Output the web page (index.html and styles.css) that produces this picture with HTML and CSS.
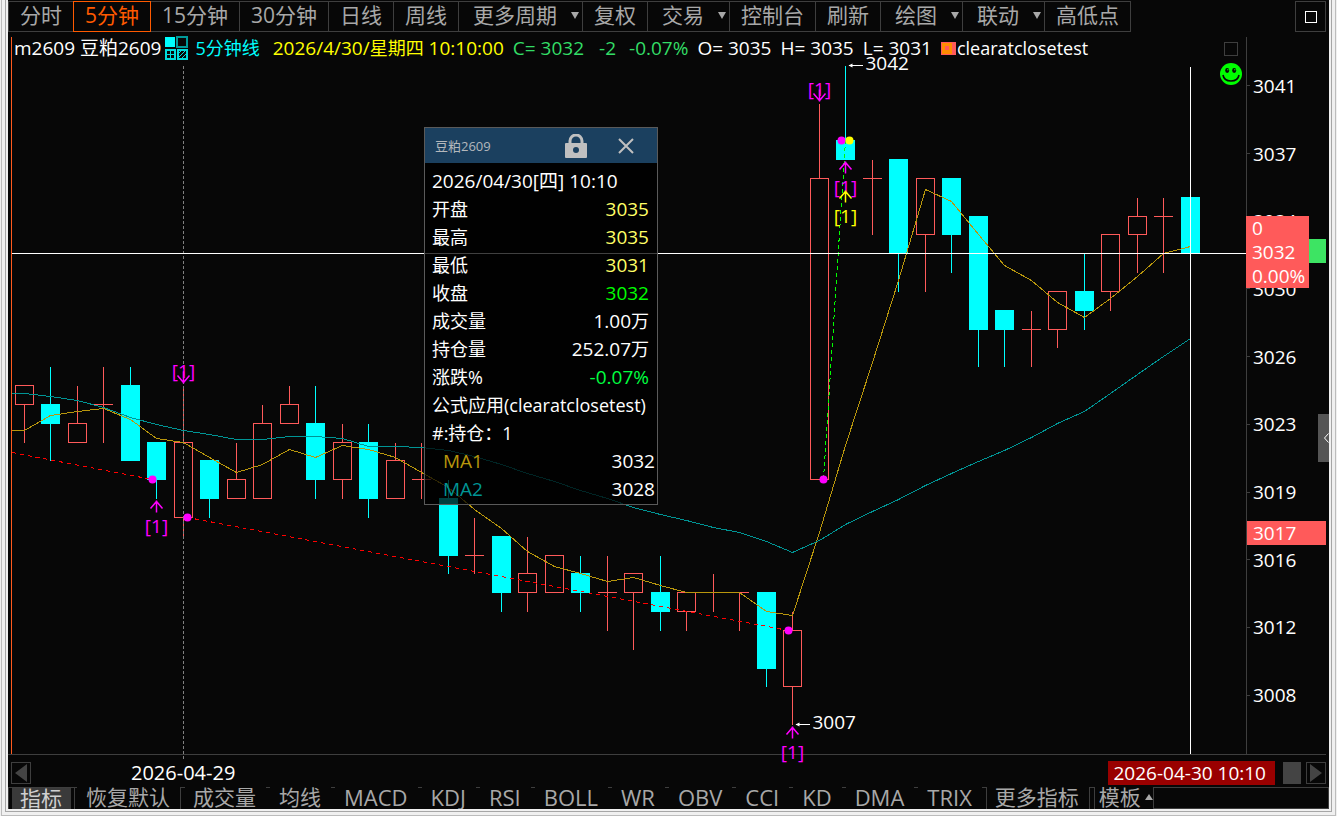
FILE: index.html
```html
<!DOCTYPE html>
<html lang="zh-CN">
<head>
    <meta charset="UTF-8">
    <meta name="viewport" content="width=device-width, initial-scale=1.0">
    <title>豆粕2609 5分钟线</title>
    <link rel="stylesheet" href="styles.css">
</head>
<body>
<div class="frame">
<div class="window">

    <!-- 周期工具栏 -->
    <header class="toolbar">
        <nav class="periods">
            <button type="button">分时</button>
            <button type="button" class="active">5分钟</button>
            <button type="button">15分钟</button>
            <button type="button">30分钟</button>
            <button type="button">日线</button>
            <button type="button">周线</button>
            <button type="button" class="menu">更多周期</button>
            <button type="button">复权</button>
            <button type="button" class="menu">交易</button>
            <button type="button">控制台</button>
            <button type="button">刷新</button>
            <button type="button" class="menu">绘图</button>
            <button type="button" class="menu">联动</button>
            <button type="button">高低点</button>
        </nav>
        <button type="button" class="maximize" aria-label="最大化"></button>
    </header>

    <main class="chart">
        <div class="plot">
            <svg id="kline" class="kline"></svg>

            <div class="quote">
                <span class="name">m2609 豆粕2609</span>
                <svg class="grid-icon" width="24" height="24" viewBox="0 0 24 24" shape-rendering="crispEdges">
                    <rect x="1" y="1" width="10" height="10" fill="#00ffff"/>
                    <rect x="13.5" y="1.5" width="9" height="9" fill="none" stroke="#009a9a"/>
                    <rect x="12.5" y="0.5" width="11" height="11" fill="none" stroke="#009a9a"/>
                    <rect x="1.5" y="13.5" width="9" height="9" fill="none" stroke="#00dddd" stroke-width="2"/>
                    <path d="M6 13v10M1 18h10" stroke="#00dddd"/>
                    <rect x="13.5" y="13.5" width="9" height="9" fill="none" stroke="#00dddd" stroke-width="2"/>
                    <path d="M14 18l4-4M14 22l8-8M18 22l4-4" stroke="#00dddd"/>
                </svg>
                <span class="period">5分钟线</span>
                <span class="date">2026/4/30/<small>星期四</small> 10:10:00</span>
                <span class="fall close">C= 3032</span>
                <span class="fall diff">-2</span>
                <span class="fall pct">-0.07%</span>
                <span>O= 3035</span>
                <span>H= 3035</span>
                <span>L= 3031</span>
                <span class="strategy"><i></i>clearatclosetest</span>
            </div>

            <input type="checkbox" class="pin" aria-label="锁定">
            <svg class="smile" width="22" height="22" viewBox="0 0 22 22">
                <circle cx="11" cy="11" r="11" fill="#00ff00"/>
                <ellipse cx="7.2" cy="7.5" rx="2" ry="2.4" fill="#070707"/>
                <ellipse cx="14.2" cy="7.5" rx="2" ry="2.4" fill="#070707"/>
                <circle cx="7.8" cy="6.8" r="0.7" fill="#00ff00"/>
                <circle cx="14.8" cy="6.8" r="0.7" fill="#00ff00"/>
                <path d="M3 12q1 6 8 6t8-6" fill="none" stroke="#070707" stroke-width="1.6"/>
            </svg>

            <!-- 数据浮窗 -->
            <section class="popup">
                <div class="popup-head">
                    <h2>豆粕2609</h2>
                    <button type="button" aria-label="锁定浮窗">
                        <svg width="24" height="24" viewBox="0 0 24 24">
                            <path d="M6 11V7a6 6 0 0 1 12 0v4" fill="none" stroke="#c0c0c0" stroke-width="3"/>
                            <rect x="1" y="9" width="22" height="15" rx="1" fill="#c0c0c0"/>
                            <circle cx="12" cy="16" r="3" fill="#1b405f"/>
                        </svg>
                    </button>
                    <button type="button" aria-label="关闭">
                        <svg width="16" height="16" viewBox="0 0 16 16">
                            <path d="M1 1l14 14M15 1L1 15" stroke="#c0c0c0" stroke-width="2"/>
                        </svg>
                    </button>
                </div>
                <dl>
                    <div><dt class="num">2026/04/30[四] 10:10</dt></div>
                    <div><dt>开盘</dt><dd class="rise">3035</dd></div>
                    <div><dt>最高</dt><dd class="rise">3035</dd></div>
                    <div><dt>最低</dt><dd class="rise">3031</dd></div>
                    <div><dt>收盘</dt><dd class="last">3032</dd></div>
                    <div><dt>成交量</dt><dd>1.00<small>万</small></dd></div>
                    <div><dt>持仓量</dt><dd>252.07<small>万</small></dd></div>
                    <div><dt>涨跌%</dt><dd class="chg">-0.07%</dd></div>
                    <div><dt>公式应用(clearatclosetest)</dt></div>
                    <div><dt>#:持仓：1</dt></div>
                    <div class="ma ma1"><dt>MA1</dt><dd>3032</dd></div>
                    <div class="ma ma2"><dt>MA2</dt><dd>3028</dd></div>
                </dl>
            </section>
        </div>

        <!-- 价格轴 -->
        <aside class="price-axis">
            <ol>
                <li>3041</li>
                <li>3037</li>
                <li>3034</li>
                <li>3030</li>
                <li>3026</li>
                <li>3023</li>
                <li>3019</li>
                <li>3016</li>
                <li>3012</li>
                <li>3008</li>
            </ol>
            <div class="last-mark"></div>
            <div class="cursor-price">
                <span>0</span>
                <span>3032</span>
                <span>0.00%</span>
            </div>
            <div class="base-price">3017</div>
            <button type="button" class="collapse" aria-label="收起侧栏">
                <svg width="5" height="10" viewBox="0 0 5 10"><path d="M4.5 0.5L0.5 5l4 4.5" fill="none" stroke="#ffffff"/></svg>
            </button>
        </aside>
    </main>

    <!-- 时间轴 -->
    <div class="time-axis">
        <button type="button" class="scroll-btn" aria-label="向左">
            <svg width="12" height="18" viewBox="0 0 12 18"><path d="M12 0v18L0 9z" fill="#444"/></svg>
        </button>
        <time class="day">2026-04-29</time>
        <time class="cursor-time">2026-04-30 10:10</time>
        <div class="thumb"></div>
        <button type="button" class="scroll-btn" aria-label="向右">
            <svg width="12" height="18" viewBox="0 0 12 18"><path d="M0 0v18l12-9z" fill="#444"/></svg>
        </button>
    </div>

    <!-- 指标栏 -->
    <footer class="indicators">
        <button type="button" class="cn active">指标</button>
        <button type="button" class="cn">恢复默认</button>
        <button type="button" class="cn first">成交量</button>
        <button type="button" class="cn">均线</button>
        <button type="button">MACD</button>
        <button type="button">KDJ</button>
        <button type="button">RSI</button>
        <button type="button">BOLL</button>
        <button type="button">WR</button>
        <button type="button">OBV</button>
        <button type="button">CCI</button>
        <button type="button">KD</button>
        <button type="button">DMA</button>
        <button type="button">TRIX</button>
        <button type="button" class="cn more">更多指标</button>
        <button type="button" class="cn template">模板</button>
        <div class="rest"></div>
    </footer>

</div>
</div>
<script src="chart.js"></script>
</body>
</html>
```

FILE: styles.css
```css
* {
    box-sizing: border-box;
}

body {
    margin: 0;
    height: 100vh;
    overflow: hidden;
    background-color: #f0f0f0;
    color: #fff;
    font-family: "Open Sans", "Noto Sans CJK SC", sans-serif;
    font-size: 19px;
    line-height: 24px;
}

button {
    margin: 0;
    padding: 0;
    border: none;
    background: none;
    color: inherit;
    font: inherit;
    cursor: pointer;
}

svg {
    display: block;
}

small {
    font-size: 18px;
}

/* window frame */
.frame {
    height: 100%;
    margin: 0 1px;
    padding: 0 3px 3px;
    border: 1px solid #bcbcbc;
    border-top: none;
}

.window {
    display: flex;
    flex-direction: column;
    height: 100%;
    border: 1px solid #a6a6a6;
    border-top: none;
    padding: 0 2px 2px;
    background: #070707 content-box;
}

/* toolbar */
.toolbar {
    display: flex;
    justify-content: space-between;
    height: 32px;
    padding: 1px 3px 0 0;
    font-size: 21px;
    color: #a8a8a8;
}

.periods {
    display: flex;
    border: 1px solid #3e3e3e;
}

.periods button {
    padding: 0 11px 3px;
    border-right: 1px solid #3e3e3e;
    white-space: nowrap;
}

.periods button:last-child {
    border-right: none;
}

.periods .active {
    margin: -1px 0 -1px -1px;
    border: 1px solid #ff5a00;
    color: #ff5a00;
}

.periods .menu {
    display: flex;
    align-items: center;
    gap: 14px;
    padding: 0 3px 3px 14px;
}

.menu::after {
    content: "";
    border: 4px solid transparent;
    border-top: 7px solid #a8a8a8;
    border-bottom: none;
}

.maximize {
    display: flex;
    align-items: center;
    justify-content: center;
    width: 31px;
    border: 1px solid #3e3e3e;
}

.maximize::after {
    content: "";
    width: 10px;
    height: 10px;
    border: 1px solid #fff;
}

/* chart */
.chart {
    display: flex;
    flex: 1;
    min-height: 0;
    margin-right: 3px;
    border-bottom: 1px solid #3e3e3e;
}

.plot {
    position: relative;
    flex: 1;
    min-width: 0;
}

.kline {
    position: absolute;
    top: 0;
    left: 0;
    width: 100%;
    height: 100%;
    overflow: visible;
}

.kline text {
    font-size: 19px;
}

.quote {
    position: relative;
    display: flex;
    align-items: center;
    gap: 9px;
    padding: 4px 0 0 6px;
    white-space: nowrap;
}

.quote .name {
    margin-right: -6px;
}

.quote .period {
    margin-left: -2px;
    color: #00ffff;
    font-size: 18px;
}

.quote .date {
    margin-left: 4px;
    color: #ffff00;
}

.quote .fall {
    color: #33dd66;
}

.quote .diff {
    margin: 0 4px 0 6px;
}

.strategy {
    display: flex;
    align-items: center;
    font-size: 18px;
}

.strategy i {
    width: 15px;
    height: 13px;
    margin-right: 1px;
    border: 1px solid #ff5a5a;
    border-right-width: 4px;
    background: linear-gradient(#ff5a5a, #ff5a5a) center / 4px 4px no-repeat #ff8c00;
}

.pin {
    position: absolute;
    top: 10px;
    right: 8px;
    width: 14px;
    height: 14px;
    margin: 0;
    appearance: none;
    border: 1px solid #3e3e3e;
}

.smile {
    position: absolute;
    top: 31px;
    right: 4px;
}

/* popup */
.popup {
    position: absolute;
    top: 95px;
    left: 416px;
    width: 234px;
    border: 1px solid #5a5a5a;
    background-color: rgba(0, 0, 0, 0.75);
}

.popup-head {
    display: flex;
    align-items: center;
    height: 35px;
    padding: 0 23px 0 10px;
    background-color: #1b405f;
}

.popup h2 {
    flex: 1;
    margin: 0;
    color: #b4b8bc;
    font-size: 13px;
    font-weight: normal;
}

.popup-head button + button {
    margin-left: 30px;
}

.popup dl {
    margin: 0;
    padding: 4px 8px 1px 7px;
}

.popup dl div {
    display: flex;
    justify-content: space-between;
    line-height: 28px;
    white-space: nowrap;
}

.popup dt {
    font-size: 18px;
}

.popup dt.num {
    font-size: 19px;
}

.popup dd {
    margin: 0;
}

.popup .rise {
    color: #ffff66;
}

.popup .last {
    color: #00ff00;
}

.popup .chg {
    color: #00ff40;
}

.popup .ma {
    margin: 0 -6px 0 11px;
}

.popup .ma dt {
    font-size: 19px;
}

.ma1 dt {
    color: #b8960c;
}

.ma2 dt {
    color: #009494;
}

/* price axis */
.price-axis {
    position: relative;
    width: 80px;
}

.price-axis ol {
    display: flex;
    flex-direction: column;
    height: 100%;
    margin: 0;
    padding: 20px 0 25px;
    list-style: none;
    background: linear-gradient(#3e3e3e, #3e3e3e) 0 5px / 1px 100% no-repeat;
}

.price-axis li {
    display: flex;
    flex: 1;
    align-items: center;
    gap: 3px;
}

.price-axis li::before {
    content: "";
    width: 4px;
    height: 1px;
    background-color: #3e3e3e;
}

.cursor-price,
.base-price,
.last-mark,
.collapse {
    position: absolute;
}

.cursor-price {
    top: 184px;
    left: 0;
    width: 63px;
    padding-left: 6px;
    background-color: #ff5a5a;
}

.cursor-price span {
    display: block;
}

.last-mark {
    top: 207px;
    right: 0;
    width: 17px;
    height: 24px;
    background-color: #3de463;
}

.base-price {
    top: 489px;
    left: 1px;
    right: 0;
    padding-left: 6px;
    background-color: #ff5a5a;
}

.collapse {
    top: 382px;
    right: -3px;
    width: 11px;
    height: 48px;
    padding-left: 6px;
    background-color: #555;
}

/* time axis */
.time-axis {
    display: flex;
    align-items: center;
    height: 32px;
    padding: 3px 3px 0;
}

.scroll-btn {
    display: flex;
    align-items: center;
    justify-content: center;
    width: 20px;
    height: 22px;
    border: 1px solid #3e3e3e;
}

.day {
    flex: 1;
    margin-left: 100px;
    font-size: 20px;
}

.cursor-time {
    padding: 0 9px 0 5px;
    background-color: #990000;
}

.thumb {
    width: 18px;
    height: 22px;
    margin: 0 5px 0 8px;
    background-color: #444;
}

/* indicators */
.indicators {
    display: flex;
    height: 22px;
    overflow: hidden;
    color: #a8a8a8;
    font-size: 22px;
    line-height: 20px;
}

.indicators button {
    position: relative;
    padding: 0 12px 2px 11px;
    white-space: nowrap;
}

.indicators button + button::before {
    content: "";
    position: absolute;
    top: 0;
    left: -2px;
    width: 4px;
    height: 22px;
    border: 1px solid #3e3e3e;
    border-left: none;
    border-right: none;
}

.indicators .cn {
    font-size: 21px;
}

.indicators .active {
    border: 1px solid #3e3e3e;
    border-bottom: none;
    background: linear-gradient(#3a3a3a, #3a3a3a) center / calc(100% - 6px) 100% no-repeat;
    color: #d0d0d0;
}

.indicators .first::before {
    border-left: 1px solid #3e3e3e;
}

.indicators .more::before {
    border-right: 1px solid #3e3e3e;
}

.indicators .template {
    display: flex;
    align-items: center;
    gap: 4px;
    padding: 0 0 2px 8px;
}

.indicators button.template::before {
    border: 1px solid #3e3e3e;
}

.indicators .template::after {
    content: "";
    border: 4px solid transparent;
    border-bottom: 6px solid #a8a8a8;
    border-top: none;
}

.indicators .rest {
    flex: 1;
    border: 1px solid #3e3e3e;
}
```

FILE: chart.js
```js
// [开, 高, 低, 收]
const bars = [
    [3024, 3025, 3022, 3025], [3024, 3026, 3021, 3023], [3022, 3025, 3022, 3023],
    [3024, 3026, 3022, 3024], [3025, 3026, 3021, 3021], [3022, 3022, 3019, 3020],
    [3018, 3025, 3017, 3022], [3021, 3021, 3018, 3019], [3019, 3022, 3019, 3020],
    [3019, 3024, 3019, 3023], [3023, 3025, 3023, 3024], [3023, 3025, 3019, 3020],
    [3020, 3023, 3019, 3022], [3022, 3023, 3018, 3019], [3019, 3022, 3019, 3021],
    [3020, 3022, 3019, 3020], [3019, 3020, 3015, 3016], [3016, 3018, 3015, 3016],
    [3017, 3017, 3013, 3014], [3014, 3017, 3013, 3015], [3014, 3016, 3014, 3016],
    [3015, 3016, 3013, 3014], [3014, 3016, 3012, 3014], [3014, 3015, 3011, 3015],
    [3014, 3016, 3012, 3013], [3013, 3014, 3012, 3014], [3014, 3015, 3013, 3014],
    [3014, 3014, 3012, 3014], [3014, 3014, 3009, 3010], [3009, 3013, 3007, 3012],
    [3020, 3040, 3020, 3036], [3038, 3042, 3037, 3037], [3036, 3037, 3033, 3036],
    [3037, 3037, 3030, 3032], [3033, 3036, 3030, 3036], [3036, 3036, 3031, 3033],
    [3034, 3034, 3026, 3028], [3029, 3029, 3026, 3028], [3028, 3029, 3026, 3028],
    [3028, 3030, 3027, 3030], [3030, 3032, 3028, 3029], [3030, 3033, 3029, 3033],
    [3033, 3035, 3031, 3034], [3034, 3035, 3031, 3034], [3035, 3035, 3031, 3032]
];

// 窗口左侧之前的均线值
const ma5Head = [3022.6, 3023.4, 3023.6, 3023.8];
const ma20Head = [3024.6, 3024.4, 3024.2, 3023.85, 3023.3, 3022.95, 3022.6, 3022.4, 3022.15, 3022.15,
    3022.3, 3022.3, 3022.2, 3021.75, 3021.75, 3021.7, 3021.55, 3021.25, 3020.8];

const HIGH = 3042;
const LOW = 3007;
const svg = document.getElementById('kline');

function average(n, head) {
    return bars.map((bar, i) => {
        if (i < head.length) return head[i];
        return bars.slice(i - n + 1, i + 1).reduce((sum, b) => sum + b[3], 0) / n;
    });
}

function draw() {
    const w = svg.clientWidth;
    const h = svg.clientHeight;
    const step = (w - 72) / (bars.length - 1);
    const x = i => Math.floor(16 + i * step) + 0.5;
    const y = p => Math.round(33 + (HIGH - p) * (h - 63) / (HIGH - LOW)) + 0.5;
    const out = [];

    const line = (x1, y1, x2, y2, color, dash) => {
        out.push(`<line x1="${x1}" y1="${y1}" x2="${x2}" y2="${y2}" stroke="${color}" stroke-dasharray="${dash || 'none'}" shape-rendering="crispEdges"/>`);
    };
    const text = (tx, ty, color, str, anchor) => {
        out.push(`<text x="${tx}" y="${ty}" fill="${color}" text-anchor="${anchor || 'middle'}">${str}</text>`);
    };

    // 左边线
    line(3.5, 5, 3.5, h, '#ff5a1e');

    bars.forEach(([o, hi, lo, c], i) => {
        const cx = x(i);
        if (c < o) {
            line(cx, y(hi), cx, y(lo), '#00ffff');
            out.push(`<rect x="${cx - 9.5}" y="${y(o) - 0.5}" width="19" height="${y(c) - y(o) + 1}" fill="#00ffff"/>`);
        } else if (c === o) {
            line(cx, y(hi), cx, y(lo), '#ff5a5a');
            line(cx - 9.5, y(c), cx + 9.5, y(c), '#ff5a5a');
        } else {
            line(cx, y(hi), cx, y(c), '#ff5a5a');
            line(cx, y(o), cx, y(lo), '#ff5a5a');
            out.push(`<rect x="${cx - 9}" y="${y(c)}" width="18" height="${y(o) - y(c)}" fill="none" stroke="#ff5a5a" shape-rendering="crispEdges"/>`);
        }
    });

    // 换日线
    line(x(6), 34, x(6), h + 7, '#808080', '3 2');

    // 均线
    [[average(5, ma5Head), '#b8960c'], [average(20, ma20Head), '#009494']].forEach(([values, color]) => {
        const points = values.map((v, i) => `${x(i)},${y(v)}`).join(' ');
        out.push(`<polyline points="4,${y(values[0])} ${points}" fill="none" stroke="${color}" shape-rendering="crispEdges"/>`);
    });

    // 持仓连线
    line(4, y(3021.45), x(5) - 4, y(3020), '#ff0000', '4 4');
    line(x(6) + 4, y(3018), x(29) - 4, y(3012), '#ff0000', '4 4');
    line(x(30) + 4, y(3020), x(31), y(3038), '#00ff00', '4 3');

    const dot = (cx, p, color) => out.push(`<circle cx="${cx}" cy="${y(p)}" r="4" fill="${color}"/>`);
    dot(x(5) - 4, 3020, '#ff00ff');
    dot(x(6) + 4, 3018, '#ff00ff');
    dot(x(29) - 4, 3012, '#ff00ff');
    dot(x(30) + 4, 3020, '#ff00ff');
    dot(x(31) - 4, 3038, '#ff00ff');
    dot(x(31) + 4, 3038, '#ffff00');

    // 买卖信号
    const buy = (cx, top, color) => {
        out.push(`<path d="M${cx} ${top}v12M${cx - 6} ${top + 8}l6 -7l6 7" fill="none" stroke="${color}" stroke-width="1.5"/>`);
        text(cx, top + 32, color, '[1]');
    };
    const sell = (cx, bottom) => {
        out.push(`<path d="M${cx} ${bottom - 12}v12M${cx - 6} ${bottom - 8}l6 7l6 -7" fill="none" stroke="#ff00ff" stroke-width="1.5"/>`);
        text(cx, bottom - 6, '#ff00ff', '[1]');
    };
    buy(x(5), y(3019) + 2, '#ff00ff');
    sell(x(6), y(3025) - 2);
    buy(x(29), y(3007) + 2, '#ff00ff');
    sell(x(30), y(3040) - 2);
    buy(x(31), y(3037) + 2, '#ff00ff');
    buy(x(31), y(3037) + 31, '#ffff00');

    // 最高 / 最低
    [[31, HIGH], [29, LOW]].forEach(([i, p]) => {
        line(x(i) + 3, y(p), x(i) + 17, y(p), '#ffffff');
        out.push(`<path d="M${x(i) + 3} ${y(p)}l4 -2v4z" fill="#ffffff"/>`);
        text(x(i) + 20, y(p) + 4, '#ffffff', p, 'start');
    });

    // 十字光标
    line(4, y(3032), w, y(3032), '#ffffff');
    line(x(44), 35, x(44), h, '#ffffff');

    svg.innerHTML = out.join('');
}

draw();
window.addEventListener('resize', draw);
```
